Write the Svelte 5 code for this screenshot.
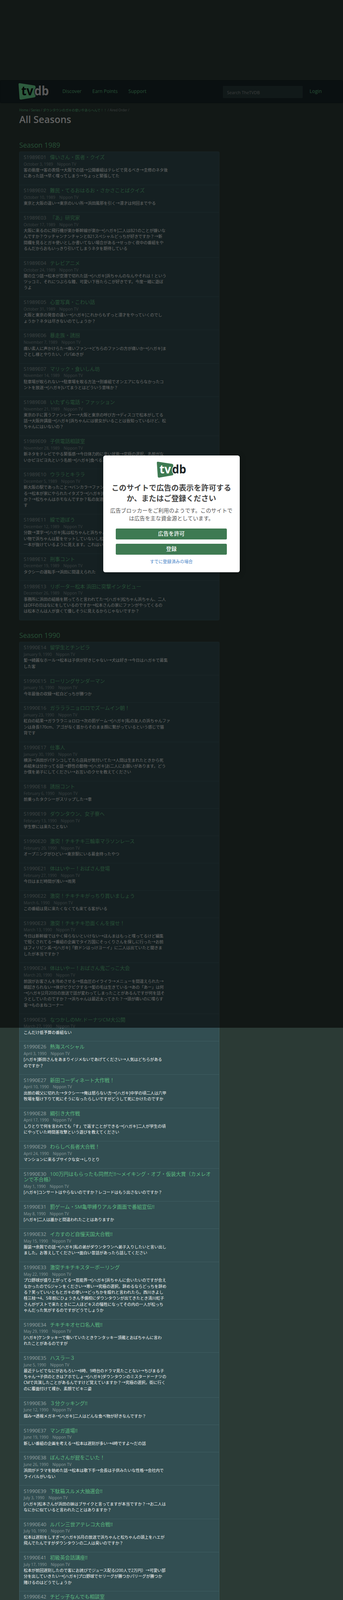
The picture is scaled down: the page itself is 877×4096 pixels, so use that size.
<script>
  const seasons = [
    { year: 1989, start: 1, rows: [
      ['偉いさん・医者・クイズ', 'October 3, 1989', '客の態度→客の表情→大阪での話→公開番組はテレビで見るべき→圭修のネタ後\nにあった話→早く喋ってしまう→ちょっと緊張してた'],
      ['難民・てるおはるお・さかさことばクイズ', 'October 10, 1989', '東京と大阪の違い→東京のいい所→浜田風邪を引く→漫才は何回までやる'],
      ['『あ』研究家', 'October 17, 1989', '大阪に来るのに飛行機が楽か新幹線が楽か→[ハガキ]二人はB21のことが嫌いな\nんですか？ウッチャンナンチャンとB21スペシャルどっちが好きですか？→新\n間欄を見るとガキ使いとしか書いてない場合がある→せっかく夜中の番組をや\nるんだからおもいっきり引いてしまうネタを期待している'],
      ['テレビアニメ', 'October 24, 1989', '腹の立つ話→松本が空港で切れた話→[ハガキ]浜ちゃんのなんやそれは！という\nツッコミ、それにつぶらな瞳、可愛い下唇たらこが好きです。今度一緒に遊ぼ\nうよ'],
      ['心霊写真・こわい話', 'October 31, 1989', '大阪と東京の発音の違い→[ハガキ]これからもずっと漫才をやっていくのでし\nょうか？ネタは尽きないのでしょうか？'],
      ['暴走族・誘拐', 'November 7, 1989', '痛い素人に声かけらた→痛いファン→どちらのファンの方が痛いか→[ハガキ]ま\nさとし様とやりたい、パパぬきが'],
      ['マリック・食いしん坊', 'November 14, 1989', '駐車場が取られない→駐車場を取る方法→別番組でオンエアにならなかったコ\nントを放送→[ハガキ]いてまうとはどういう意味か？'],
      ['いたずら電話・ファッション', 'November 21, 1989', '東京の子に貰うファンレター→大阪と東京の呼び方→ディスコで松本がしてる\n話→大阪弁講座→[ハガキ]浜ちゃんには彼女がいることは皆知っているけど、松\nちゃんにはいないの？'],
      ['子供電話相談室', 'November 28, 1989', '新ネタをテレビでやる緊張感→今日体力的に辛い状態→究極の選択、名前がな\nいかピヨピヨ丸という名前→[ハガキ]食べること'],
      ['ウララとキララ', 'December 5, 1989', '新大阪の駅であったこと→バンカラ→ファン\nる→松本が家にやられたイタズラ→[ハガキ]松\nか？→松ちゃんはホモなんですか？私の友達\nす'],
      ['線で遊ぼう', 'December 12, 1989', '分数→漢字→[ハガキ]私は松ちゃんと浜ちゃん\nい物で浜ちゃんは髪をセットしていないし松\n一本が抜けているように見えます。これはい'],
      ['刑事コント', 'December 19, 1989', 'タクシーの運転手→浜田に間違えられた'],
      ['リポーター松本 浜田に突撃インタビュー', 'December 26, 1989', '事務所に浜田の結婚を黙ってろと言われてた→[ハガキ]松ちゃん浜ちゃん、二人\nはOFFの日はなにをしているのですか→松本さんの家にファンがやってくるの\nは松本さんは人が良くて優しそうに見えるからじゃないですか？'],
    ]},
    { year: 1990, start: 14, rows: [
      ['留学生とチンピラ', 'January 9, 1990', '髪→綺麗なホール→松本は子供が好きじゃない→犬は好き→今日はハガキで募集\nした客'],
      ['ローリングサンダーマン', 'January 16, 1990', '今年最後の収録→紅白どっちが勝つか'],
      ['ガラララニョロロでズームイン朝！', 'January 23, 1990', '紅白の結果→ガラララニョロロ→次の罰ゲーム→[ハガキ]私の友人の浜ちゃんファ\nンは身長170cm、アゴがなく首からそのまま顔に繋がっているという感じで猫\n背です'],
      ['仕事人', 'January 30, 1990', '横浜→浜田がパチンコしてたら店員が気付いてた→人間は生まれたときから死\nぬ結末は分かってる話→野性の動物→[ハガキ]お二人にお願いがあります。どう\nか僕を弟子にしてください→お互いのクセを教えてください'],
      ['誘拐コント', 'February 6, 1990', '前乗ったタクシーがスリップした→車'],
      ['ダウンタウン、女子寮へ', 'February 13, 1990', '学生寮には来たことない'],
      ['激突！チキチキ三輪車マラソンレース', 'February 20, 1990', 'オープニングがひどい→東京駅にいる募金持ったやつ'],
      ['体はいやー！おばさん登場', 'February 27, 1990', '今日はまだ時間が浅い→雨男'],
      ['激突！チキチキがっちり買いましょう', 'March 6, 1990', 'この番組は見に来たくなくても来てる客がいる'],
      ['激突！チキチキ恐面くんを探せ！', 'March 13, 1990', '今日は新幹線ではやく帰らないといけない→ほんまはもっと喋ってるけど編集\nで短くされてる→番組の企画でタイ万国にそっくりさんを探しに行った→お前\nはフィリピン系→[ハガキ]「欽ドンはっけヨーイ」に二人は出ていたと聞きま\nしたが本当ですか？'],
      ['体はいやー！おばさん鬼ごっこ大会', 'March 20, 1990', '前説がお客さんを冷めさせる→低血圧のイライラ→メニューを間違えられた→\n朝起きられない→体がピクピクする→髪の毛は生きている→あの「あー」は何\n→[ハガキ]2月20日の放送で話が変わってしまったことがあるんですが何を話そ\nうとしていたのですか？→浜ちゃんは最近太ってきた？→頭が痛いのに喋らす\n客→ものまねコーナー'],
      ['なつかしのMr.ドーナツCM大公開', 'March 27, 1990', 'こんだけ低予算の番組ない'],
      ['熱海スペシャル', 'April 3, 1990', '[ハガキ]新田さんをあまりイジメないであげてください→人気はどちらがある\nのですか？'],
      ['新田コーディネート大作戦！', 'April 10, 1990', '出前の親父に切れた→タクシー→俺は怒らない方→[ハガキ]中学の頃二人は六甲\n牧場を駆け下りて死にそうになったらしいですがどうして死にかけたのですか'],
      ['綱引き大作戦', 'April 17, 1990', 'しりとりで何を言われても「す」で返すことができる→[ハガキ]二人が学生の頃\nにやっていた時間差攻撃という遊びを教えてください'],
      ['わらしべ長者大合戦！', 'April 24, 1990', 'マンションに来るブサイクな女→しりとり'],
      ['100万円はもらったも同然だ!!〜メイキング・オブ・仮装大賞（カメレオンで不合格）', 'May 1, 1990', '[ハガキ]コンサートはやらないのですか？レコードはもう出さないのですか？'],
      ['罰ゲーム・SM亀甲縛りアルタ画面で番組宣伝!!', 'May 8, 1990', '[ハガキ]二人は誰かと間違われたことはありますか'],
      ['イカすのど自慢天国大合戦!!', 'May 15, 1990', '服装→余興での話→[ハガキ]私の弟がダウンタウンへ弟子入りしたいと言い出し\nました。お答えしてください→面白い昔話があったら話してください'],
      ['激突チキチキスターボーリング', 'May 22, 1990', 'プロ野球が盛り上がってる→芸能界→[ハガキ]浜ちゃんに会いたいのですが会え\nなかったのでGジャンをください→寒い→究極の選択。辞めるならどっちを辞め\nる？笑っていいともとガキの使い→どっちかを殴れと言われたら。西川きよし\n桂三枝→4、5年前にひょうきん予備校にダウンタウンが出てきたとき清川虹子\nさんがゲストで来たときに二人ほどキスの犠牲になってその内の一人が松っち\nゃんだった気がするのですがどうでしょうか'],
      ['チキチキオセロ名人戦!!', 'May 29, 1990', '[ハガキ]ケンタッキーで働いていたときケンタッキー頂戴とおばちゃんに言わ\nれたことがあるのですが'],
      ['ハスラー３', 'June 5, 1990', '最近テレビでなにがおもろい→8時、9時台のドラマ見たことない→ちびまる子\nちゃん→子供のときはアホでしょ→[ハガキ]ダウンタウンのミスタードーナツの\nCMで共演したことがあるんですけど覚えていますか？→究極の選択。街に行く\nのに覆面付けて裸か、素顔でビキニ姿'],
      ['３分クッキング!!', 'June 12, 1990', '掴み→透視メガネ→[ハガキ]二人はどんな食べ物が好きなんですか？'],
      ['マンガ道場!!', 'June 19, 1990', '新しい番組の企画を考える→松本は遅刻が多い→4時ですよ〜だの話'],
      ['ぼんさんが屁をこいた！', 'June 26, 1990', '浜田がドラマを始めた話→松本は歌下手→会長は子供みたいな性格→会社内で\nライバルがいない'],
      ['下駄箱スルメ大抽選会!!', 'July 3, 1990', '[ハガキ]松本さんが浜田の妹はブサイクと言ってますが本当ですか？→お二人は\nなにかに似ていると言われたことはありますか？'],
      ['ルパン三世アテレコ大合戦!!', 'July 10, 1990', '松本は遅刻をしすぎ→[ハガキ]6月の放送で浜ちゃんと松ちゃんの頭上をハエが\n飛んでたんですがダウンタウンの二人は臭いのですか？'],
      ['初級英会話講座!!', 'July 17, 1990', '松本が前回遅刻したので客にお詫びでジュース配る(200人で2万円）→可愛い部\n分を出していきたい→[ハガキ]プロ野球でセリーグが勝つかパリーグが勝つか\n賭けるのはどうでしょうか'],
      ['チビッ子なんでも相談室', 'July 24, 1990', ''],
    ]},
  ];
  const code = (y, n) => `S${y}E${String(n).padStart(2, '0')}`;
</script>

{#snippet logo(kind)}
  <svg class="logo {kind}" viewBox="0 0 110 60" role="img" aria-label="tvdb">
    <path class="shield" d="M4 0 L57 8 Q61.5 8.8 61.5 13 L61.5 46 Q61.5 50.5 57 51.2 L9 59.6 Q4 60.2 3.5 55 L0 4.5 Q-0.2 -0.5 4 0 Z" />
    <text class="tv" x="10" y="44.5" textLength="43" lengthAdjust="spacingAndGlyphs">tv</text>
    <text class="db" x="57" y="44.5" textLength="53" lengthAdjust="spacingAndGlyphs">db</text>
  </svg>
{/snippet}

<div class="page">
  <nav class="navbar">
    <a class="brand" href="#top">{@render logo('on-nav')}</a>
    <ul class="links">
      <li>Discover</li>
      <li>Earn Points</li>
      <li>Support</li>
    </ul>
    <div class="search">Search TheTVDB</div>
    <span class="login">Login</span>
  </nav>

  <main class="content">
    <div class="crumbs">
      <span class="lnk">Home</span> / <span class="lnk">Series</span> / <span class="lnk">ダウンタウンのガキの使いやあらへんで！！</span> / Aired Order /
    </div>
    <h1>All Seasons</h1>

    {#each seasons as s}
      <section class="season">
        <h3>Season {s.year}</h3>
        <ul class="list">
          {#each s.rows as r, i}
            <li class="row">
              <h4><span class="num">{code(s.year, s.start + i)}</span><span class="ttl">{r[0]}</span></h4>
              <div class="meta"><span>{r[1]}</span><span>Nippon TV</span></div>
              <p>{r[2]}</p>
            </li>
          {/each}
        </ul>
      </section>
    {/each}
  </main>

  <div class="backdrop"></div>
  <div class="modal">
    {@render logo('on-white')}
    <h2>このサイトで広告の表示を許可するか、またはご登録ください</h2>
    <p class="lead">広告ブロッカーをご利用のようです。このサイトでは広告を主な資金源としています。</p>
    <button>広告を許可</button>
    <button>登録</button>
    <a class="signin" href="#top">すでに登録済みの場合</a>
  </div>
</div>

<style>
  :global(body) {
    margin: 0;
    background: #2b3a35;
  }
  .page {
    zoom: 0.683;
    position: relative;
    width: 1284px;
    height: 6000px;
    overflow: hidden;
    padding-top: 300px;
    box-sizing: border-box;
    background: #2b3a35;
    color: #fff;
    font-family: "Open Sans", "Noto Sans CJK JP", sans-serif;
    font-size: 15px;
    line-height: 22.4px;
  }
  .navbar {
    display: flex;
    align-items: center;
    height: 87px;
    box-sizing: border-box;
    padding: 0 78px 0 67px;
    background: #1a2829;
    border: 1px solid #141f1f;
    border-radius: 4px;
  }
  .brand {
    display: flex;
  }
  .logo {
    display: block;
    width: 115px;
    height: 62px;
    overflow: visible;
  }
  .logo text {
    font-family: "Open Sans", "Noto Sans", sans-serif;
    font-weight: 700;
    font-size: 45px;
    paint-order: stroke;
  }
  .on-nav .shield { fill: #6dd893; }
  .on-nav .tv { fill: #0d1414; }
  .on-nav .db { fill: #d4d4d4; stroke: #1a2829; stroke-width: 5px; }
  .on-white .shield { fill: #3e7a52; }
  .on-white .tv { fill: #fff; }
  .on-white .db { fill: #1c2426; stroke: #fff; stroke-width: 5px; }

  .links {
    display: flex;
    gap: 40px;
    list-style: none;
    margin: 0 0 3px 50px;
    padding: 0;
    color: #5cbb80;
    font-size: 18px;
    flex: 1;
  }
  .search {
    width: 299px;
    height: 45px;
    box-sizing: border-box;
    padding: 13px 16px 0;
    background: #2a3d3c;
    color: #8a9292;
    font-size: 16px;
    border-radius: 2px;
    margin-top: 3px;
    line-height: 24px;
  }
  .login {
    margin: 0 0 3px 26px;
    color: #5cbb80;
    font-size: 18px;
  }
  .content {
    padding: 0 462px 0 72px;
  }
  .crumbs {
    margin-top: 15px;
    font-size: 12px;
    line-height: 20px;
    color: #8a9292;
    white-space: nowrap;
  }
  .lnk { color: #5cbb80; }
  h1 {
    margin: 5px 0 61px;
    font-size: 36px;
    line-height: 40px;
    font-weight: 600;
    color: #e8e8e8;
  }
  .season + .season { margin-top: 41px; }
  h3 {
    margin: 0 0 8px;
    font-size: 26px;
    line-height: 32px;
    font-weight: 400;
    color: #5cbb80;
  }
  .list {
    list-style: none;
    margin: 0;
    padding: 0;
    background: #324e52;
    border: 1px solid #3f5e62;
    border-radius: 4px;
  }
  .row {
    padding: 9px 15px 21.1px;
  }
  .row + .row { border-top: 1px solid #3f5e62; }
  h4 {
    margin: 0 0 6px;
    font-size: 18.7px;
    line-height: 21.4px;
    font-weight: 400;
  }
  .num {
    color: #95a3a3;
    margin-right: 14px;
  }
  .ttl { color: #5cbb80; }
  .meta {
    display: flex;
    gap: 15px;
    height: 21px;
    font-size: 14.8px;
    line-height: 20px;
    color: #8a9a9b;
  }
  .row p {
    margin: 0;
    white-space: pre-line;
    color: #f4f4f4;
  }
  .backdrop {
    position: absolute;
    left: 0;
    top: 0;
    width: 100%;
    height: 3852px;
    background: rgba(0, 0, 0, 0.58);
  }
  .modal {
    position: absolute;
    left: 386px;
    top: 1707px;
    width: 511px;
    height: 438px;
    box-sizing: border-box;
    padding: 24px 24px 0;
    display: flex;
    flex-direction: column;
    align-items: center;
    background: #fff;
    border-radius: 8px;
    box-shadow: 0 4px 24px rgba(0, 0, 0, 0.3);
    text-align: center;
    color: #555;
    font-family: "Noto Sans CJK JP", sans-serif;
  }
  .modal .logo { width: 110px; height: 60px; flex: none; }
  .modal h2 {
    margin: 17px 0 0;
    font-size: 28px;
    line-height: 40px;
    font-weight: 700;
    color: #444;
  }
  .lead {
    margin: 9px 0 0;
    font-size: 20px;
    line-height: 30px;
  }
  button {
    width: 416px;
    height: 41px;
    flex: none;
    margin-top: 16px;
    padding: 0 0 3px;
    border: 0;
    border-radius: 4px;
    background: #3e7a52;
    color: #fff;
    font: 500 20px/1 "Noto Sans CJK JP", sans-serif;
  }
  .lead + button { margin-top: 24px; }
  .signin {
    margin-top: 13px;
    font-size: 16px;
    line-height: 24px;
    color: #4a86c8;
    text-decoration: none;
  }
</style>
